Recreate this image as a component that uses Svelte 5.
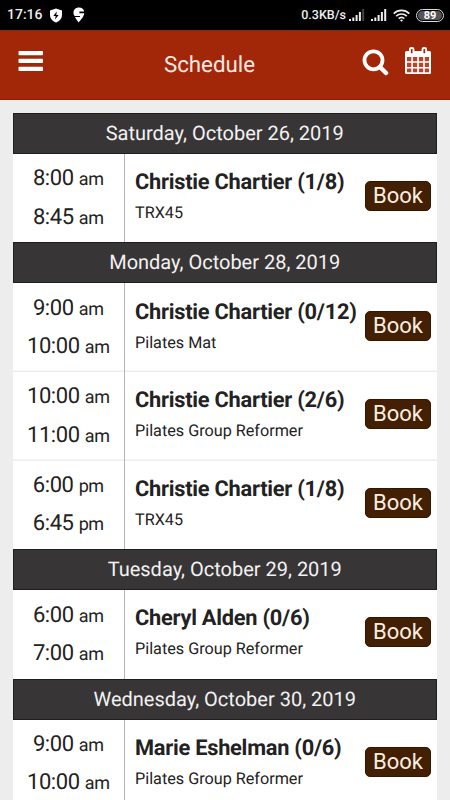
<script lang="ts">
	interface Session {
		start: string;
		end: string;
		period: string;
		trainer: string;
		spots: string;
		type: string;
	}

	interface Day {
		date: string;
		sessions: Session[];
	}

	const days: Day[] = [
		{
			date: 'Saturday, October 26, 2019',
			sessions: [
				{ start: '8:00', end: '8:45', period: 'am', trainer: 'Christie Chartier', spots: '1/8', type: 'TRX45' }
			]
		},
		{
			date: 'Monday, October 28, 2019',
			sessions: [
				{ start: '9:00', end: '10:00', period: 'am', trainer: 'Christie Chartier', spots: '0/12', type: 'Pilates Mat' },
				{ start: '10:00', end: '11:00', period: 'am', trainer: 'Christie Chartier', spots: '2/6', type: 'Pilates Group Reformer' },
				{ start: '6:00', end: '6:45', period: 'pm', trainer: 'Christie Chartier', spots: '1/8', type: 'TRX45' }
			]
		},
		{
			date: 'Tuesday, October 29, 2019',
			sessions: [
				{ start: '6:00', end: '7:00', period: 'am', trainer: 'Cheryl Alden', spots: '0/6', type: 'Pilates Group Reformer' }
			]
		},
		{
			date: 'Wednesday, October 30, 2019',
			sessions: [
				{ start: '9:00', end: '10:00', period: 'am', trainer: 'Marie Eshelman', spots: '0/6', type: 'Pilates Group Reformer' }
			]
		}
	];
</script>

<div class="screen">
	<div class="status-bar">
		<span class="clock">17:16</span>
		<svg class="shield" width="14" height="15" viewBox="0 0 14 15">
			<path d="M7 .5 13 2.500V7c0 3.700-2.500 6-6 7.500C3.500 13 1 10.700 1 7V2.500Z" fill="#fff" />
			<path d="M7.800 3.500 4.300 8h2.400l-.7 3.500L9.700 7H7.300Z" fill="#000" />
		</svg>
		<svg class="pin" width="12" height="16" viewBox="0 0 12 16">
			<path d="M6 .5C2.700.5.500 2.700.500 5.500c0 1.800.5 2.800 1.100 3.400h5.400v1.200H2c.8 2.100 2.700 4 3.700 5.400 2.300-3 5.500-6 5.500-9.200H6.400V4.500h4.800C10.700 1.900 8.700.5 6 .5Z" fill="#fff" />
		</svg>
		<span class="speed">0.3KB/s</span>
		<svg class="signal" width="16" height="12" viewBox="0 0 16 12">
			<path d="M0 10h2v2H0ZM3.300 8.500h2V12h-2ZM6.600 6h2v6h-2ZM9.900 3h2v9h-2Z" fill="#eee" />
			<path d="M13.200 0h2v12h-2Z" fill="#444" />
		</svg>
		<svg class="signal second" width="16" height="12" viewBox="0 0 16 12">
			<path d="M0 10h2v2H0ZM3.300 8.500h2V12h-2ZM6.600 6h2v6h-2ZM9.900 3h2v9h-2ZM13.200 0h2v12h-2Z" fill="#eee" />
		</svg>
		<svg class="wifi" width="17" height="13" viewBox="0 0 17 13" fill="none" stroke="#eee" stroke-width="1.600">
			<path d="M.7 4.600C5 .3 12 .3 16.300 4.600M3.200 7.200c3-2.900 7.600-2.900 10.600 0M5.700 9.700c1.600-1.500 4-1.500 5.600 0" />
			<path d="m7 11.200 1.500 1.500 1.500-1.500c-.8-.8-2.200-.8-3 0Z" fill="#eee" stroke="none" />
		</svg>
		<span class="battery"><span class="level">89</span></span>
	</div>

	<header>
		<button class="icon-btn menu" aria-label="Menu">
			<svg width="26" height="22" viewBox="0 0 26 22">
				<g fill="#fff">
					<rect x=".5" y=".9" width="24.500" height="4.300" rx=".8" />
					<rect x=".5" y="8.800" width="24.500" height="4.300" rx=".8" />
					<rect x=".5" y="16.700" width="24.500" height="4.300" rx=".8" />
				</g>
			</svg>
		</button>
		<h1>Schedule</h1>
		<button class="icon-btn search" aria-label="Search">
			<svg width="27" height="27" viewBox="0 0 27 27" fill="none" stroke="#fff">
				<circle cx="11.500" cy="11.300" r="9" stroke-width="3.800" />
				<path d="m18 18 6 6" stroke-width="4.500" stroke-linecap="round" />
			</svg>
		</button>
		<button class="icon-btn calendar" aria-label="Calendar">
			<svg width="28" height="30" viewBox="0 0 28 30">
				<path d="M2.500 5h23A1.500 1.500 0 0 1 27 6.500v20a1.500 1.500 0 0 1-1.500 1.500h-23A1.500 1.500 0 0 1 1 26.500v-20A1.500 1.500 0 0 1 2.500 5Z" fill="#fff" />
				<g fill="#b5452b">
					<path d="M3 11h4.300v4.300H3ZM8.900 11h4.300v4.300H8.900ZM14.900 11h4.300v4.300h-4.300ZM20.800 11H25v4.300h-4.200Z" />
					<path d="M3 16.700h4.300V21H3ZM8.900 16.700h4.300V21H8.900ZM14.900 16.700h4.300V21h-4.300ZM20.800 16.700H25V21h-4.200Z" />
					<path d="M3 22.400h4.300v3.800H3ZM8.900 22.400h4.300v3.800H8.900ZM14.900 22.400h4.300v3.800h-4.300ZM20.800 22.400H25v3.800h-4.200Z" />
				</g>
				<rect x="5" y="1" width="5.400" height="8" rx="2.200" fill="#fff" />
				<rect x="17.600" y="1" width="5.400" height="8" rx="2.200" fill="#fff" />
				<path d="M7.700 2.900v4.300M20.300 2.900v4.300" stroke="#a22709" stroke-width="1.700" />
			</svg>
		</button>
	</header>

	<main>
		{#each days as day (day.date)}
			<section>
				<h2>{day.date}</h2>
				{#each day.sessions as session}
					<div class="session">
						<div class="times">
							<div>{session.start} <small>{session.period}</small></div>
							<div>{session.end} <small>{session.period}</small></div>
						</div>
						<div class="details">
							<div class="trainer">{session.trainer} ({session.spots})</div>
							<div class="type">{session.type}</div>
						</div>
						<button class="book">Book</button>
					</div>
				{/each}
			</section>
		{/each}
	</main>
</div>

<style>
	:global(body) {
		background: #ededed;
	}
	.screen {
		height: 800px;
		overflow: hidden;
		background: #ededed;
		font-family: Roboto, sans-serif;
		color: #222;
		text-rendering: geometricPrecision;
	}
	.status-bar {
		display: flex;
		align-items: center;
		box-sizing: border-box;
		height: 30px;
		padding: 0 6px 0 7px;
		background: #000;
		color: #eee;
	}
	.clock {
		width: 35px;
		font-size: 14px;
		font-weight: 500;
		margin-right: 7px;
	}
	.pin {
		margin-left: 10px;
	}
	.speed {
		margin-left: auto;
		margin-right: 3px;
		font-size: 12.500px;
		font-weight: 500;
	}
	.second {
		margin-left: 6px;
	}
	.wifi {
		margin: 0 6px 0 6px;
	}
	.battery {
		display: flex;
		box-sizing: border-box;
		width: 28px;
		height: 13px;
		padding: 1px;
		border: 1px solid #ddd;
		border-radius: 7px;
	}
	.level {
		flex: 1;
		border-radius: 5px;
		background: #555;
		color: #fff;
		font-size: 11px;
		font-weight: 700;
		line-height: 9px;
		text-align: center;
	}
	header {
		display: flex;
		box-sizing: border-box;
		height: 70px;
		padding: 0 18px 0 18px;
		border-top: 1px solid #7a2c1c;
		border-bottom: 1px solid #8c1c05;
		background: #a22709;
	}
	.icon-btn {
		padding: 0;
		border: none;
		background: none;
		line-height: 0;
		align-self: flex-start;
	}
	.menu {
		width: 80px;
		margin-top: 19px;
		text-align: left;
	}
	h1 {
		flex: 1;
		margin: 0;
		padding-right: 41px;
		color: #fbe9e3;
		font-size: 22.300px;
		font-weight: 400;
		line-height: 68px;
		text-align: center;
	}
	.search {
		margin: 18px 15px 0 0;
	}
	.calendar {
		margin-top: 15px;
	}
	main {
		margin: 13px 13px 0 12.500px;
	}
	h2 {
		box-sizing: border-box;
		height: 40.800px;
		margin: 0;
		border: 1px solid #1f1d1e;
		background: #383536;
		color: #f2f2f2;
		font-size: 20px;
		font-weight: 400;
		line-height: 38px;
		text-align: center;
	}
	.session {
		display: flex;
		align-items: center;
		box-sizing: border-box;
		height: 88.700px;
		padding-right: 6px;
		background: #fff;
	}
	.session:not(:last-child) {
		box-shadow: inset 0 -1.500px #eee;
	}
	.times {
		box-sizing: border-box;
		width: 112.500px;
		height: 100%;
		padding-top: 6.500px;
		border-right: 1px solid #b5b5b5;
		font-size: 22px;
		letter-spacing: -0.4px;
		line-height: 37.300px;
		text-align: center;
	}
	small {
		font-size: 18px;
	}
	.details {
		flex: 1;
		align-self: flex-start;
		padding: 14.300px 0 0 10px;
		white-space: nowrap;
	}
	.trainer {
		font-size: 21.800px;
		font-weight: 700;
		letter-spacing: -0.25px;
		line-height: 30px;
	}
	.type {
		font-size: 16.200px;
		line-height: 29px;
	}
	.book {
		width: 66px;
		height: 30px;
		padding: 0;
		margin-top: -4px;
		border: 1px solid #321700;
		border-radius: 5px;
		background: #431f03;
		color: #fbeee0;
		font-family: inherit;
		font-size: 22px;
		line-height: 28px;
	}
</style>
